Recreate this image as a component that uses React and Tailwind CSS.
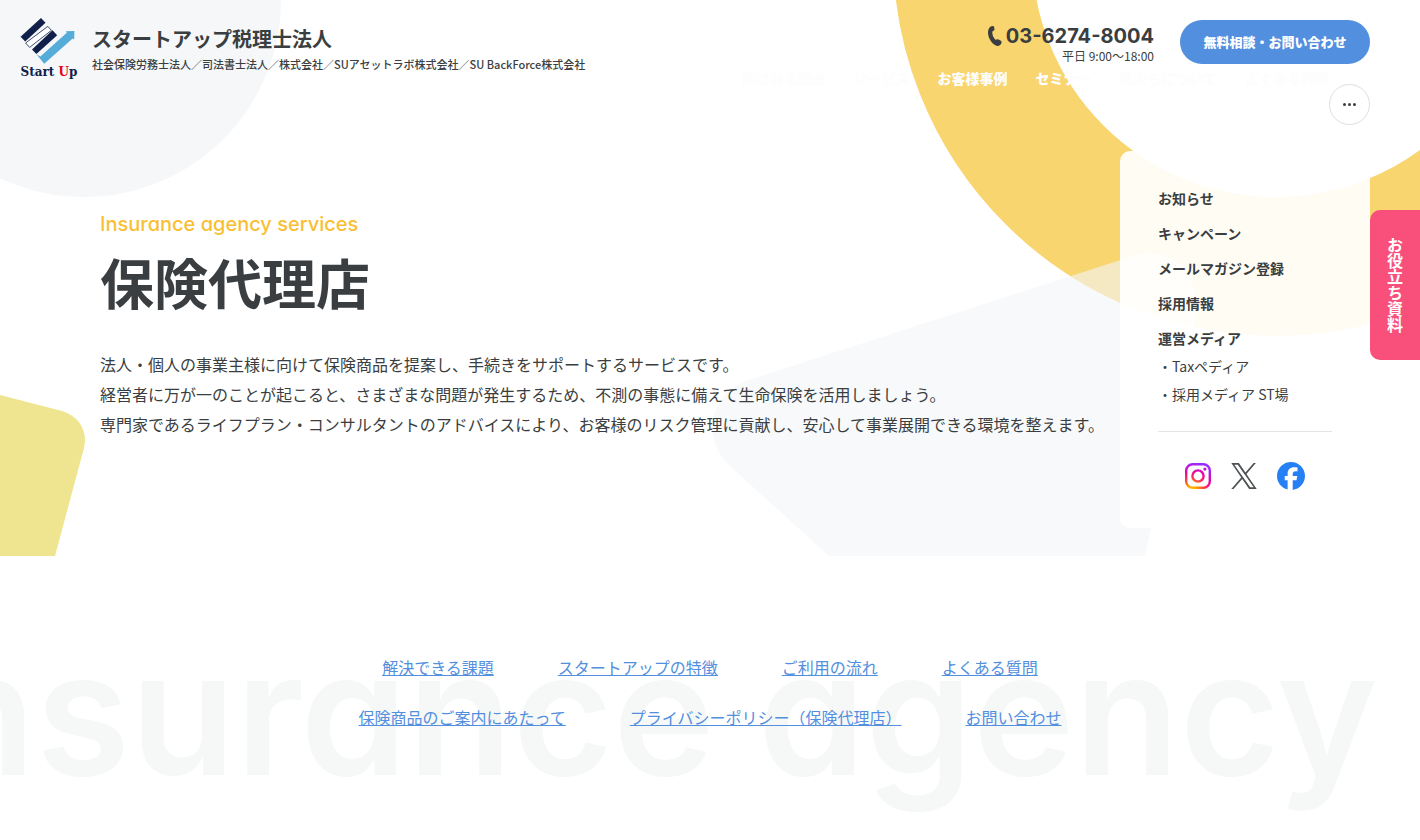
import { FaFacebook } from 'react-icons/fa6'

const navItems = ['選ばれる理由', 'サービス', 'お客様事例', 'セミナー', '私たちについて', 'よくある質問']

const menuItems = ['お知らせ', 'キャンペーン', 'メールマガジン登録', '採用情報', '運営メディア']

const mediaItems = ['・Taxペディア', '・採用メディア ST場']

const anchorRows = [
  ['解決できる課題', 'スタートアップの特徴', 'ご利用の流れ', 'よくある質問'],
  ['保険商品のご案内にあたって', 'プライバシーポリシー（保険代理店）', 'お問い合わせ'],
]

const Logo = () => (
  <a href="#" className="flex w-[58px] flex-col items-center">
    <svg viewBox="0 0 58 46" className="h-[46px] w-[58px]" aria-hidden="true">
      <path d="M27.8 8.4L31.4 12.4L9.6 29.4L5.6 25Z" fill="#fff" stroke="#10204a" strokeWidth="0.8" />
      <path d="M21 0L25.5 4.8L5.2 23.5L.6 18.8Z" fill="#10204a" />
      <path d="M32.5 12.2L37.2 17.2L16.4 36L12 31.4Z" fill="#10204a" />
      <path d="M16.4 36.2L20.4 38.4L46.8 14.8L45.8 13.2L54.4 13L54.2 21.6L52.6 20.6L24.2 45.8Z" fill="#55acd8" />
    </svg>
    <span className="font-['DejaVu_Serif',serif] text-xs leading-4 font-bold whitespace-nowrap text-[#10204a]">
      Start <span className="text-[#e60020]">U</span>p
    </span>
  </a>
)

const PhoneIcon = () => (
  <svg viewBox="0 0 14 20" className="h-5 w-3.5" fill="#3a3e40" aria-hidden="true">
    <path d="M3.4.3L5.2 0C5.8 0 6.2 1 6.4 2.2C6.5 3.6 6.3 4.4 5.6 4.8L4.3 5.4C4 8.4 5.4 12 7.8 14L9 13.3C9.7 13 10.5 13.4 11.6 14C13 14.9 13.8 15.4 13.7 16.2C13.3 18.6 11.4 20 9.2 19.9C4.4 18.6 0 12.4 0 6.4C0 3.4 1.3 1 3.4.3Z" />
  </svg>
)

const InstagramIcon = () => (
  <svg viewBox="0 0 26 26" className="h-[26px] w-[26px]" fill="none" aria-hidden="true">
    <defs>
      <radialGradient id="insta" gradientUnits="userSpaceOnUse" cx="7" cy="28" r="28">
        <stop offset="0" stopColor="#ffd600" />
        <stop offset="0.22" stopColor="#ff9a00" />
        <stop offset="0.45" stopColor="#ff3a4e" />
        <stop offset="0.72" stopColor="#e800a8" />
        <stop offset="1" stopColor="#9a2cff" />
      </radialGradient>
    </defs>
    <rect x="1.2" y="1.2" width="23.6" height="23.6" rx="6.4" stroke="url(#insta)" strokeWidth="2.4" />
    <circle cx="13" cy="13" r="5.6" stroke="url(#insta)" strokeWidth="2.4" />
    <circle cx="19.9" cy="6.1" r="1.6" fill="#c814c8" />
  </svg>
)

const XIcon = () => (
  <svg viewBox="0 0 1200 1227" className="h-[26px] w-[26px]" fill="#4d5153" aria-hidden="true">
    <path d="M714.163 519.284L1160.89 0H1055.03L667.137 450.887L357.328 0H0L468.492 681.821L0 1226.37H105.866L515.491 750.218L842.672 1226.37H1200L714.137 519.284H714.163ZM569.165 687.828L521.697 619.934L144.011 79.6944H306.615L611.412 515.685L658.88 583.579L1055.08 1150.3H892.476L569.165 687.854V687.828Z" />
  </svg>
)

const HeroShapes = () => (
  <div className="pointer-events-none absolute inset-0 overflow-hidden" aria-hidden="true">
    <svg viewBox="0 0 300 556" className="absolute top-0 left-0 h-[556px] w-[300px]">
      <circle cx="84" cy="0" r="197" fill="#f5f7f9" />
      <path d="M0 395L62 411C79 416 88 431 84 448L55 556H0Z" fill="#efe591" />
    </svg>
    <svg viewBox="0 0 720 556" className="absolute top-0 right-0 h-[556px] w-[720px]">
      <circle cx="576" cy="-47" r="313.5" fill="none" stroke="#f8d56e" strokeWidth="139" />
      <path
        d="M46 381L436 255C470 246 498 270 496 306C496 314 495 324 493 332L445 556H129L30 466C2 440 8 396 46 381Z"
        fill="#f2f5f8"
        fillOpacity="0.61"
      />
    </svg>
  </div>
)

const Header = () => (
  <header className="absolute inset-x-0 top-0 z-10 flex items-start justify-between pr-[50px] pl-5">
    <div className="flex gap-3.5 pt-[18px]">
      <Logo />
      <div className="pt-2">
        <p className="text-xl leading-[26px] font-bold">スタートアップ税理士法人</p>
        <p className="mt-0.5 text-[11px] leading-5 font-medium whitespace-nowrap">
          社会保険労務士法人／司法書士法人／株式会社／SUアセットラボ株式会社／SU BackForce株式会社
        </p>
      </div>
    </div>
    <div className="flex flex-col items-end pt-5">
      <div className="flex gap-[26px]">
        <div className="pt-1 text-right">
          <a
            href="tel:03-6274-8004"
            className="flex items-center gap-1 font-[Inter,sans-serif] text-xl leading-6 font-bold"
          >
            <PhoneIcon />
            03-6274-8004
          </a>
          <p className="text-xs leading-4">平日 9:00〜18:00</p>
        </div>
        <button className="h-11 w-[190px] rounded-full bg-[#528fde] text-[13px] font-black text-white">
          無料相談・お問い合わせ
        </button>
      </div>
      <div className="flex items-start">
        <nav className="flex gap-7 text-sm leading-7 font-black text-[#fdfdfd]">
          {navItems.map((item) => (
            <a key={item} href="#">
              {item}
            </a>
          ))}
        </nav>
        <button
          aria-label="メニュー"
          className="mt-5 flex h-[41px] w-[41px] items-center justify-center gap-0.5 rounded-full border border-[#dddfe0] bg-white"
        >
          <span className="h-[3px] w-[3px] rounded-full bg-[#3a3e40]" />
          <span className="h-[3px] w-[3px] rounded-full bg-[#3a3e40]" />
          <span className="h-[3px] w-[3px] rounded-full bg-[#3a3e40]" />
        </button>
      </div>
    </div>
  </header>
)

const SubMenu = () => (
  <aside className="absolute top-[151px] right-[50px] z-20 w-[250px] rounded-[10px] bg-white/92 px-[38px] pt-[33px] pb-[38px]">
    <ul className="space-y-[7px] text-sm leading-7 font-bold">
      {menuItems.map((item) => (
        <li key={item}>
          <a href="#">{item}</a>
        </li>
      ))}
    </ul>
    <ul className="text-sm leading-7">
      {mediaItems.map((item) => (
        <li key={item}>
          <a href="#">{item}</a>
        </li>
      ))}
    </ul>
    <div className="mt-[23px] flex items-center justify-center gap-5 border-t border-[#e2e4e5] pt-[30px]">
      <a href="#" aria-label="Instagram">
        <InstagramIcon />
      </a>
      <a href="#" aria-label="X">
        <XIcon />
      </a>
      <a href="#" aria-label="Facebook">
        <FaFacebook className="h-7 w-7 text-[#2680f5]" />
      </a>
    </div>
  </aside>
)

const Hero = () => (
  <section className="relative px-[100px] pt-[210px] pb-[117px]">
    <HeroShapes />
    <div className="relative">
      <p className="font-[Inter,sans-serif] text-xl leading-7 font-medium text-[#f9bf34] [font-feature-settings:'cv11']">
        Insurance agency services
      </p>
      <h1 className="mt-2.5 text-[54px] leading-[68px] font-bold">保険代理店</h1>
      <p className="mt-[33px] text-base leading-[30px]">
        法人・個人の事業主様に向けて保険商品を提案し、手続きをサポートするサービスです。
        <br />
        経営者に万が一のことが起こると、さまざまな問題が発生するため、不測の事態に備えて生命保険を活用しましょう。
        <br />
        専門家であるライフプラン・コンサルタントのアドバイスにより、お客様のリスク管理に貢献し、安心して事業展開できる環境を整えます。
      </p>
    </div>
  </section>
)

const AnchorLinks = () => (
  <section className="relative overflow-hidden pt-[86px] pb-[98px]">
    <p
      className="absolute top-[30px] right-[42px] font-[Inter,sans-serif] text-[172px] leading-[252px] font-semibold whitespace-nowrap text-[#f6f8f8] [font-feature-settings:'cv11']"
      aria-hidden="true"
    >
      Insurance agency
    </p>
    <div className="relative">
      {anchorRows.map((row) => (
        <ul key={row[0]} className="flex justify-center gap-16 text-base leading-[50px]">
          {row.map((item) => (
            <li key={item}>
              <a href="#" className="text-[#528fde] underline">
                {item}
              </a>
            </li>
          ))}
        </ul>
      ))}
    </div>
  </section>
)

const App = () => (
  <div className="relative bg-white font-['Noto_Sans_CJK_JP',sans-serif] text-[#3a3e40]">
    <Header />
    <SubMenu />
    <a
      href="#"
      className="fixed top-[210px] right-0 z-30 flex h-[150px] w-[50px] items-center justify-center rounded-l-[10px] bg-[#f94f7b] text-base font-bold text-white [writing-mode:vertical-rl]"
    >
      お役立ち資料
    </a>
    <Hero />
    <AnchorLinks />
  </div>
)

export default App
